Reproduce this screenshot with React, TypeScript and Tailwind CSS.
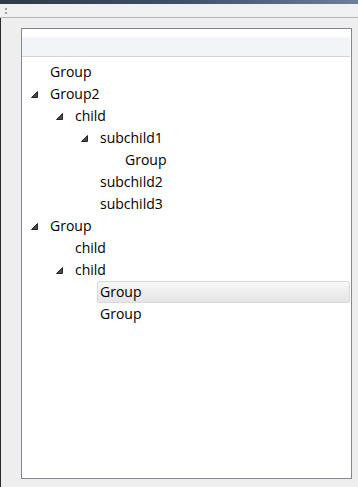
import React from "react";

interface Node {
  label: string;
  level: number;
  expanded?: boolean;
  selected?: boolean;
}

const rows: Node[] = [
  { label: "Group", level: 0 },
  { label: "Group2", level: 0, expanded: true },
  { label: "child", level: 1, expanded: true },
  { label: "subchild1", level: 2, expanded: true },
  { label: "Group", level: 3 },
  { label: "subchild2", level: 2 },
  { label: "subchild3", level: 2 },
  { label: "Group", level: 0, expanded: true },
  { label: "child", level: 1 },
  { label: "child", level: 1, expanded: true },
  { label: "Group", level: 2, selected: true },
  { label: "Group", level: 2 },
];

const indents = ["pl-0", "pl-[25px]", "pl-[50px]", "pl-[75px]"];

function Expander({ open }: { open?: boolean }) {
  return (
    <div className="flex h-full w-[25px] shrink-0 items-center">
      {open && (
        <svg width="7" height="7" viewBox="0 0 7 7" className="ml-[9px] mt-[1px]">
          <polygon points="6.5,0.5 6.5,6.5 0.5,6.5" fill="#4a4a4a" stroke="#262626" strokeWidth="1" />
        </svg>
      )}
    </div>
  );
}

export default function App() {
  return (
    <div
      className="flex h-[487px] w-[358px] flex-col overflow-hidden bg-[#eeeeee]"
      style={{ fontFamily: '"Open Sans", "Noto Sans", sans-serif' }}
    >
      <div className="h-[4px] bg-gradient-to-r from-[#2e3a48] via-[#3d5068] to-[#6b7f98]" />
      <div className="flex h-[14px] items-center border-b border-[#b4b4b4] bg-[#f0f0f0] pl-[5px]">
        <div className="flex flex-col gap-[2px]">
          <span className="h-[2px] w-[2px] bg-[#a0a0a0]" />
          <span className="h-[2px] w-[2px] bg-[#a0a0a0]" />
        </div>
      </div>
      <div className="flex flex-1 border-l border-[#2a2a2a] pb-[8px] pl-[20px] pr-[6px] pt-[10px]">
        <div className="flex flex-1 flex-col border border-[#828790] bg-white">
          <div className="mr-[1px] h-[28px] border-b border-[#d5d5d5] bg-gradient-to-b from-white from-[25%] to-[#f3f4f8] to-[35%]" />
          <div className="flex flex-col pt-[4px]">
            {rows.map((r, i) => (
              <div key={i} className={`flex h-[22px] items-center ${indents[r.level]}`}>
                <Expander open={r.expanded} />
                <div
                  className={
                    r.selected
                      ? "mr-[1px] flex h-[22px] flex-1 items-center rounded-[2px] border border-[#d9d9d9] bg-gradient-to-b from-[#f8f8f8] to-[#e5e5e5] pl-[2px]"
                      : "flex h-[22px] items-center pl-[3px]"
                  }
                >
                  <span className="text-[14px] leading-none text-black">{r.label}</span>
                </div>
              </div>
            ))}
          </div>
        </div>
      </div>
    </div>
  );
}
